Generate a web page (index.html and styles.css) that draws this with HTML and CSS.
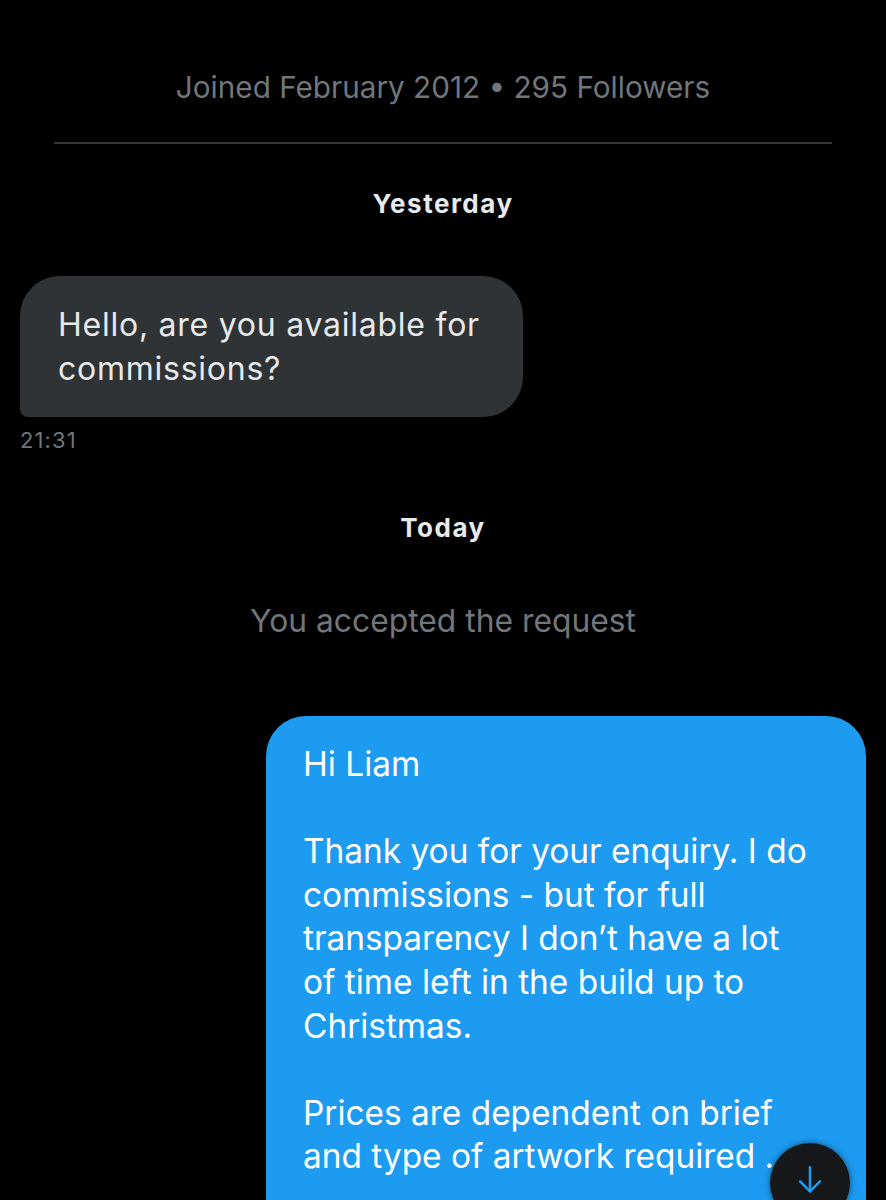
FILE: index.html
```html
<!DOCTYPE html>
<html lang="en">
<head>
<meta charset="utf-8">
<title>Messages</title>
<link rel="stylesheet" href="styles.css">
</head>
<body>
<main class="thread">
  <p class="meta">Joined February 2012 • 295 Followers</p>
  <hr class="divider">
  <p class="day">Yesterday</p>
  <div class="msg-in">
    <div class="bubble bubble-in">Hello, are you available for<br>commissions?</div>
    <div class="time">21:31</div>
  </div>
  <p class="day day-today">Today</p>
  <p class="system">You accepted the request</p>
  <div class="msg-out">
    <div class="bubble bubble-out">Hi Liam<br><br>Thank you for your enquiry. I do<br>commissions - but for full<br>transparency I don’t have a lot<br>of time left in the build up to<br>Christmas.<br><br>Prices are dependent on brief<br>and type of artwork required .</div>
  </div>
</main>
<button class="scroll-down" aria-label="Scroll to bottom">
  <svg width="34" height="34" viewBox="0 0 24 24" fill="none" stroke="#1d9bf0" stroke-width="1.8" stroke-linecap="round" stroke-linejoin="round"><path d="M12 3v17"/><path d="M5 13l7 7 7-7"/></svg>
</button>
</body>
</html>
```

FILE: styles.css
```css
html, body {
  margin: 0;
  padding: 0;
  background: #000;
  height: 1200px;
  overflow: hidden;
}
body {
  font-family: "Inter", "Liberation Sans", sans-serif;
  color: #e7e9ea;
}
.thread {
  display: flex;
  flex-direction: column;
}
.meta {
  margin: 69px 0 0;
  text-align: center;
  font-size: 29.7px;
  line-height: 36px;
  color: #71767b;
}
.divider {
  margin: 37px 54px 0;
  border: 0;
  height: 2px;
  background: #333639;
}
.day {
  margin: 44px 0 0;
  text-align: center;
  font-size: 26px;
  line-height: 32px;
  font-weight: 700;
  letter-spacing: 1.5px;
  color: #e7e9ea;
}
.msg-in {
  margin: 56px 0 0 20px;
  display: flex;
  flex-direction: column;
  align-items: flex-start;
}
.bubble {
  line-height: 43.5px;
}
.bubble-in {
  box-sizing: border-box;
  width: 503px;
  padding: 27px 10px 27px 38px;
  background: #2f3336;
  border-radius: 40px 40px 40px 8px;
  color: #e7e9ea;
  font-size: 32px;
  letter-spacing: 0.75px;
}
.time {
  margin-top: 10px;
  font-size: 22px;
  line-height: 26px;
  letter-spacing: 1.1px;
  color: #71767b;
}
.day-today {
  margin-top: 59px;
}
.system {
  margin: 57px 0 0;
  text-align: center;
  font-size: 31.8px;
  line-height: 40px;
  color: #71767b;
}
.msg-out {
  margin: 75px 20px 0 0;
  display: flex;
  justify-content: flex-end;
}
.bubble-out {
  box-sizing: border-box;
  width: 600px;
  padding: 27px 10px 80px 37px;
  background: #1d9bf0;
  border-radius: 40px 40px 8px 40px;
  color: #fff;
  font-size: 33.4px;
  line-height: 43.6px;
}
.scroll-down {
  position: fixed;
  left: 770px;
  top: 1143px;
  width: 80px;
  height: 80px;
  border-radius: 50%;
  border: 0;
  padding: 0 0 6px;
  background: #16181a;
  display: flex;
  align-items: center;
  justify-content: center;
  box-shadow: 0 0 6px rgba(0, 0, 0, 0.5);
}
```
